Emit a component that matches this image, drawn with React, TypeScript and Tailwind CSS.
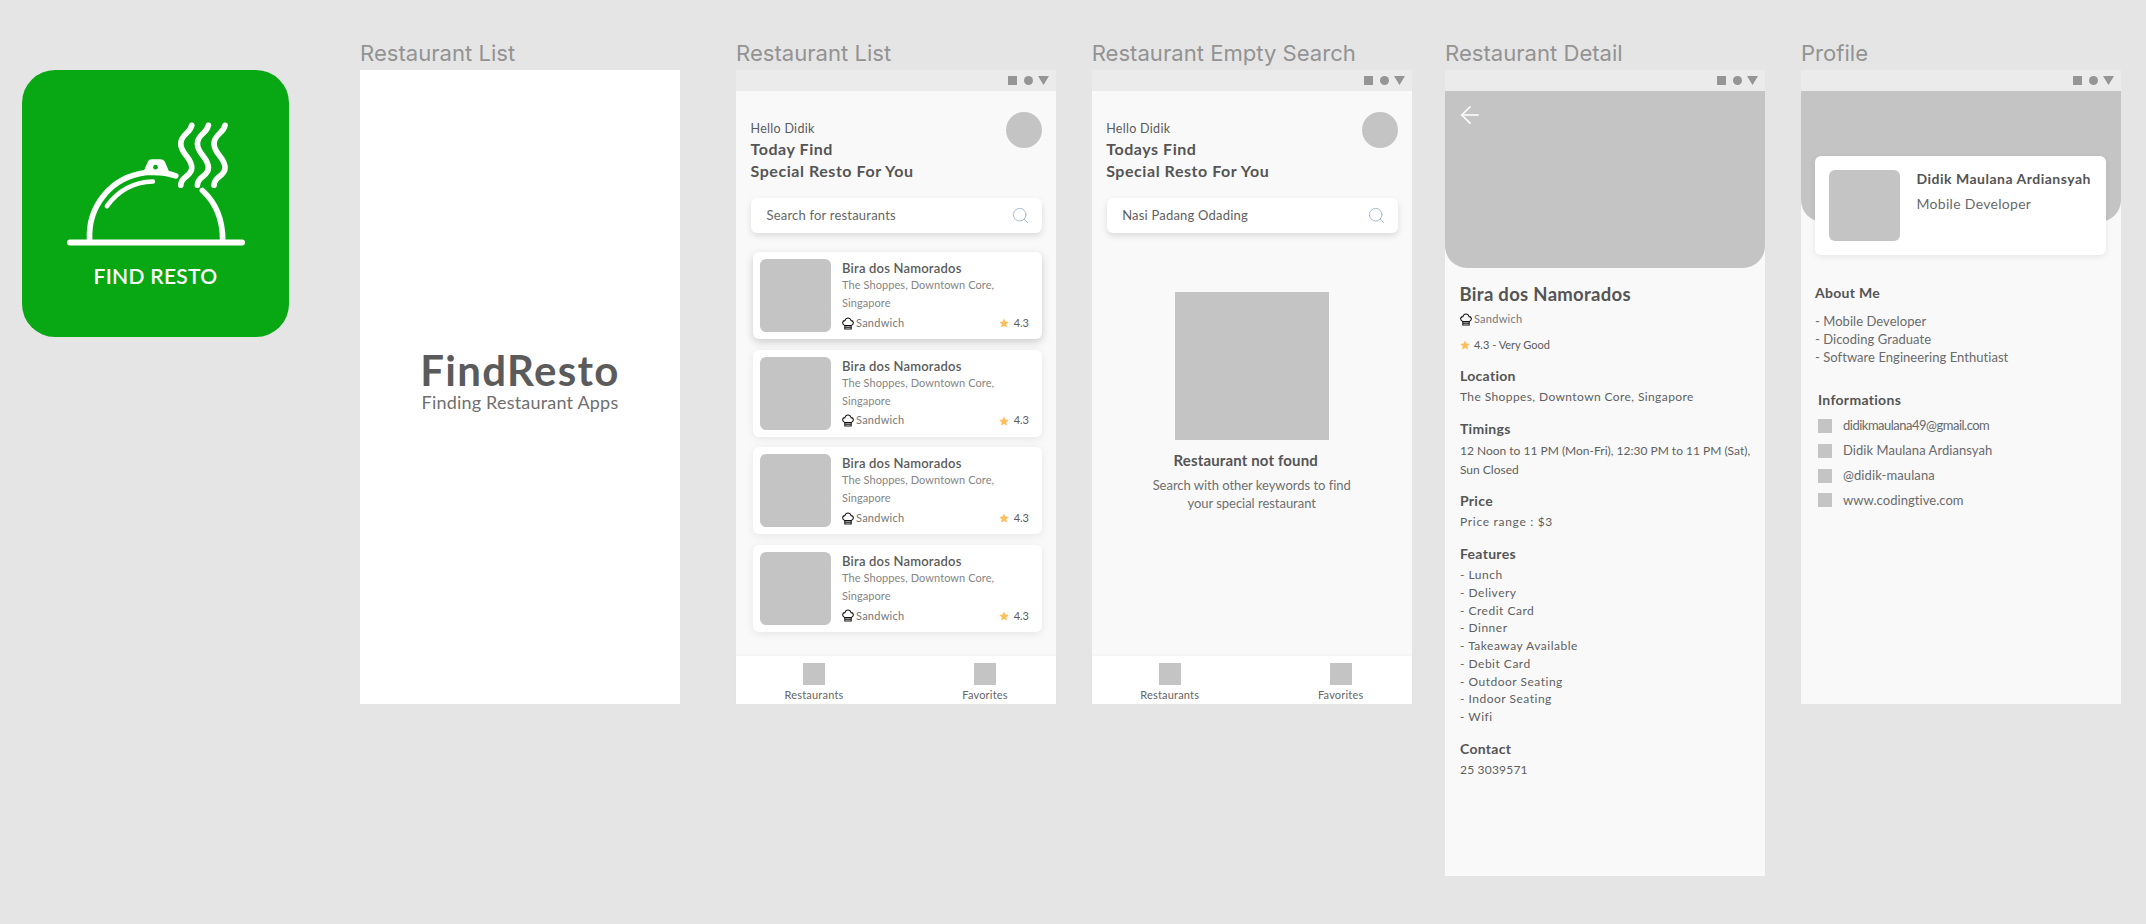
import { ArrowLeft, Search } from "lucide-react";

function StatusBar() {
  return (
    <div className="h-[21px] shrink-0 bg-[#ebebeb] flex items-center justify-end pr-[7px]">
      <div className="w-[9px] h-[9px] bg-[#959595]" />
      <div className="ml-[7px] w-[9px] h-[9px] rounded-full bg-[#959595]" />
      <svg width="11" height="9" viewBox="0 0 11 9" className="ml-[5px]"><path d="M0 0H11L5.5 9Z" fill="#959595" /></svg>
    </div>
  );
}

function Frame({ label, ml, h, bg, children }: { label: string; ml: string; h: string; bg: string; children?: React.ReactNode }) {
  return (
    <div className={`shrink-0 w-[320px] pt-[37px] ${ml}`}>
      <div className="h-[33px] leading-[32px] text-[22.1px] text-[#939393] font-[Inter,sans-serif] whitespace-nowrap">{label}</div>
      <div className={`flex flex-col ${h} ${bg}`}>{children}</div>
    </div>
  );
}

function Hat() {
  return (
    <svg width="12" height="13" viewBox="0 0 12 13" fill="none" stroke="#111" strokeWidth="1.05" className="shrink-0">
      <path d="M2.8 8.6C1.3 7.8.5 6.9.6 5.6.8 4.3 1.7 3.6 2.9 3.6 3.4 2 4.5 1 6 1S8.6 2 9.1 3.6C10.3 3.6 11.2 4.3 11.4 5.6 11.5 6.9 10.7 7.8 9.2 8.6Z" />
      <path d="M2.8 8.6V12H9.2V8.6M2.8 10.2H9.2" />
    </svg>
  );
}

function Star() {
  return (
    <svg width="10" height="10" viewBox="0 0 24 24" fill="#fdbf5e" className="shrink-0">
      <path d="M12 1l3.4 7.4 8 1-5.9 5.5 1.6 8.1L12 19l-7.1 4 1.6-8.1L.6 9.4l8-1z" />
    </svg>
  );
}

function Header({ title, query, dark }: { title: string; query: string; dark?: boolean }) {
  return (
    <div className="pl-[15px] pr-[14px]">
      <div className="pt-[21px] flex justify-between h-[91px]">
        <div className="pt-[8px] -ml-[0.5px]">
          <div className="text-[12.5px] leading-[18px] text-[#5b5b5b] tracking-[0.3px]">Hello Didik</div>
          <div className="text-[16px] leading-[22px] font-bold text-[#555555] tracking-[0.55px]">
            <div>{title}</div>
            <div>Special Resto For You</div>
          </div>
        </div>
        <div className="w-[36px] h-[36px] rounded-full bg-[#c4c4c4]" />
      </div>
      <div className="mt-[16px] h-[35px] rounded-[6px] bg-white shadow-[0_3px_6px_rgba(0,0,0,0.12)] flex items-center justify-between pl-[15.5px] pr-[12px]">
        <span className={`text-[13px] tracking-[0.2px] ${dark ? "text-[#5e5e5e]" : "text-[#666666]"}`}>{query}</span>
        <Search size={19} strokeWidth={1.1} className="text-[#9fb0c4]" />
      </div>
    </div>
  );
}

function Card({ strong }: { strong?: boolean }) {
  return (
    <div className={`h-[87px] rounded-[6px] bg-white p-[7px] flex ${strong ? "shadow-[0_3px_8px_rgba(0,0,0,0.18)]" : "shadow-[0_2px_8px_rgba(0,0,0,0.08)]"}`}>
      <div className="w-[71px] h-[73px] rounded-[6px] bg-[#c4c4c4] shrink-0" />
      <div className="ml-[11px] flex-1 pr-[6px]">
        <div className="text-[13px] leading-[18px] font-semibold text-[#5b5b5b] tracking-[0.2px]">Bira dos Namorados</div>
        <div className="-mt-[1px] text-[11px] leading-[18px] text-[#858585] tracking-[0.08px]">The Shoppes, Downtown Core,<br />Singapore</div>
        <div className="mt-[2px] h-[18px] flex items-center justify-between">
          <div className="flex items-center gap-[2px]">
            <Hat />
            <span className="text-[11px] text-[#777777] tracking-[0.25px]">Sandwich</span>
          </div>
          <div className="flex items-center gap-[5px]">
            <Star />
            <span className="text-[11px] text-[#5b5b5b]">4.3</span>
          </div>
        </div>
      </div>
    </div>
  );
}

function Nav() {
  return (
    <div className="mt-auto h-[48px] bg-white shadow-[0_-1px_2px_rgba(0,0,0,0.03)] flex pl-[48px] gap-[111px] pt-[7px]">
      {["Restaurants", "Favorites"].map((t) => (
        <div key={t} className="w-[60px] flex flex-col items-center">
          <div className="w-[22px] h-[22px] bg-[#c4c4c4]" />
          <div className="mt-[2px] text-[11px] leading-[16px] text-[#666666] tracking-[0.2px] whitespace-nowrap">{t}</div>
        </div>
      ))}
    </div>
  );
}

function Section({ title, mt, children }: { title: string; mt: string; children: React.ReactNode }) {
  return (
    <div className={mt}>
      <div className="text-[14px] leading-[20px] font-bold text-[#555555] tracking-[0.3px]">{title}</div>
      <div className="mt-[2px] text-[12px] text-[#5f5f5f]">{children}</div>
    </div>
  );
}

const features = ["Lunch", "Delivery", "Credit Card", "Dinner", "Takeaway Available", "Debit Card", "Outdoor Seating", "Indoor Seating", "Wifi"];
const infos = [
  { t: "didikmaulana49@gmail.com", c: "tracking-[-0.5px]" },
  { t: "Didik Maulana Ardiansyah", c: "tracking-[0.05px]" },
  { t: "@didik-maulana", c: "tracking-[0.1px]" },
  { t: "www.codingtive.com", c: "tracking-[0.05px]" },
];

export default function App() {
  return (
    <div className="w-[2146px] h-[924px] overflow-hidden bg-[#e5e5e5] flex items-start pl-[22px] font-[Lato,sans-serif]">
      <div className="shrink-0 mt-[70px] w-[267px] h-[267px] rounded-[33px] bg-[#07a814] flex flex-col items-center">
        <svg width="178" height="124" viewBox="200 275 535 371" fill="none" stroke="#fff" strokeLinecap="round" strokeWidth="17" className="mt-[52px]">
          <path d="M209 636H726" strokeWidth="18" />
          <path d="M268 630C262 530 330 438 440 426C470 424 505 428 527 436" />
          <path d="M607 480C640 510 668 560 668 630" />
          <path d="M320 527C350 485 395 455 458 453" strokeWidth="14" />
          <path d="M432 424L445 394Q447 388 456 388L480 388Q489 388 492 394L505 424Z" fill="#fff" stroke="#fff" strokeWidth="4" />
          <circle cx="466" cy="410" r="7" fill="#07a814" stroke="none" />
          <path d="M575 284C570 310 542 310 542 340C542 370 575 380 575 412C575 440 542 435 542 464" />
          <path d="M625 284C620 310 592 310 592 340C592 370 625 380 625 412C625 440 592 435 592 464" />
          <path d="M675 284C670 310 642 310 642 340C642 370 675 380 675 412C675 440 642 435 642 464" />
        </svg>
        <div className="mt-[15.5px] text-[21px] leading-[28px] font-semibold text-white tracking-[0.3px]">FIND RESTO</div>
      </div>

      <Frame label="Restaurant List" ml="ml-[71px]" h="h-[634px]" bg="bg-white">
        <div className="flex flex-col items-center pt-[276px]">
          <div className="text-[42px] leading-[48px] font-bold text-[#5b5b5b] tracking-[1.3px]">FindResto</div>
          <div className="-mt-[4px] text-[18px] leading-[24px] text-[#6f6f6f] tracking-[0.2px]">Finding Restaurant Apps</div>
        </div>
      </Frame>

      <Frame label="Restaurant List" ml="ml-[56px]" h="h-[634px]" bg="bg-[#f9f9f9]">
        <StatusBar />
        <Header title="Today Find" query="Search for restaurants" />
        <div className="mt-[19px] ml-[17px] mr-[14px] flex flex-col gap-[10.67px]">
          <Card strong />
          <Card />
          <Card />
          <Card />
        </div>
        <Nav />
      </Frame>

      <Frame label="Restaurant Empty Search" ml="ml-[35.7px]" h="h-[634px]" bg="bg-[#f9f9f9]">
        <StatusBar />
        <Header title="Todays Find" query="Nasi Padang Odading" dark />
        <div className="mt-[59px] flex flex-col items-center">
          <div className="w-[154px] h-[148px] bg-[#c4c4c4] ml-[1px]" />
          <div className="mt-[10px] mr-[12px] text-[15px] leading-[20px] font-bold text-[#555555] tracking-[0.15px]">Restaurant not found</div>
          <div className="mt-[6px] text-[13px] leading-[18px] text-[#6f6f6f] text-center tracking-[-0.03px]">
            Search with other keywords to find<br />your special restaurant
          </div>
        </div>
        <Nav />
      </Frame>

      <Frame label="Restaurant Detail" ml="ml-[33.3px]" h="h-[806px]" bg="bg-[#f9f9f9]">
        <StatusBar />
        <div className="h-[177px] shrink-0 rounded-b-[22px] bg-[#c4c4c4] pt-[10px] pl-[11px]">
          <ArrowLeft size={28} strokeWidth={1.4} className="text-white" />
        </div>
        <div className="pl-[15px] pr-[14px]">
          <div className="mt-[14px] -ml-[0.5px] text-[18.5px] leading-[24px] font-bold text-[#555555] tracking-[0.3px]">Bira dos Namorados</div>
          <div className="mt-[5px] h-[16px] flex items-center gap-[2px]">
            <Hat />
            <span className="text-[11px] text-[#777777] tracking-[0.25px]">Sandwich</span>
          </div>
          <div className="mt-[10px] h-[16px] flex items-center gap-[4px]">
            <Star />
            <span className="text-[11px] text-[#5b5b5b]">4.3 - Very Good</span>
          </div>
          <Section title="Location" mt="mt-[12.5px]"><div className="leading-[18px] tracking-[0.4px]">The Shoppes, Downtown Core, Singapore</div></Section>
          <Section title="Timings" mt="mt-[13px]">
            <div className="leading-[19px] whitespace-nowrap">12 Noon to 11 PM (Mon-Fri), 12:30 PM to 11 PM (Sat),<br />Sun Closed</div>
          </Section>
          <Section title="Price" mt="mt-[12px]"><div className="leading-[18px] tracking-[0.7px]">Price range : $3</div></Section>
          <Section title="Features" mt="mt-[13.5px]">
            <div className="leading-[17.75px] tracking-[0.5px]">
              {features.map((f) => (<div key={f}>- {f}</div>))}
            </div>
          </Section>
          <Section title="Contact" mt="mt-[13px]"><div className="leading-[18px] tracking-[0.2px]">25 3039571</div></Section>
        </div>
      </Frame>

      <Frame label="Profile" ml="ml-[36px]" h="h-[634px]" bg="bg-[#f9f9f9]">
        <StatusBar />
        <div className="h-[131px] shrink-0 rounded-b-[22px] bg-[#c4c4c4]" />
        <div className="relative -mt-[66px] ml-[14px] mr-[15px] h-[99px] rounded-[6px] bg-white shadow-[0_2px_6px_rgba(0,0,0,0.08)] p-[14px] flex">
          <div className="w-[71px] h-[71px] rounded-[6px] bg-[#c4c4c4] shrink-0" />
          <div className="ml-[16.5px] -mt-[1px]">
            <div className="text-[14px] leading-[20px] font-bold text-[#555555] tracking-[0.5px] whitespace-nowrap">Didik Maulana Ardiansyah</div>
            <div className="mt-[5px] text-[14px] leading-[20px] text-[#6a6a6a] tracking-[0.3px]">Mobile Developer</div>
          </div>
        </div>
        <div className="ml-[14px]">
          <div className="mt-[28px] text-[14px] leading-[20px] font-bold text-[#555555] tracking-[0.3px]">About Me</div>
          <div className="mt-[9px] text-[13px] leading-[18px] text-[#6a6a6a] tracking-[0.05px]">
            <div>- Mobile Developer</div>
            <div>- Dicoding Graduate</div>
            <div>- Software Engineering Enthutiast</div>
          </div>
          <div className="ml-[3px]">
            <div className="mt-[24px] text-[14px] leading-[20px] font-bold text-[#555555] tracking-[0.3px]">Informations</div>
            <div className="mt-[9px] flex flex-col gap-[10.8px]">
              {infos.map((i) => (
                <div key={i.t} className="h-[14px] flex items-center gap-[11px]">
                  <div className="w-[14px] h-[14px] bg-[#c4c4c4]" />
                  <span className={`text-[13px] text-[#6a6a6a] ${i.c}`}>{i.t}</span>
                </div>
              ))}
            </div>
          </div>
        </div>
      </Frame>
    </div>
  );
}
